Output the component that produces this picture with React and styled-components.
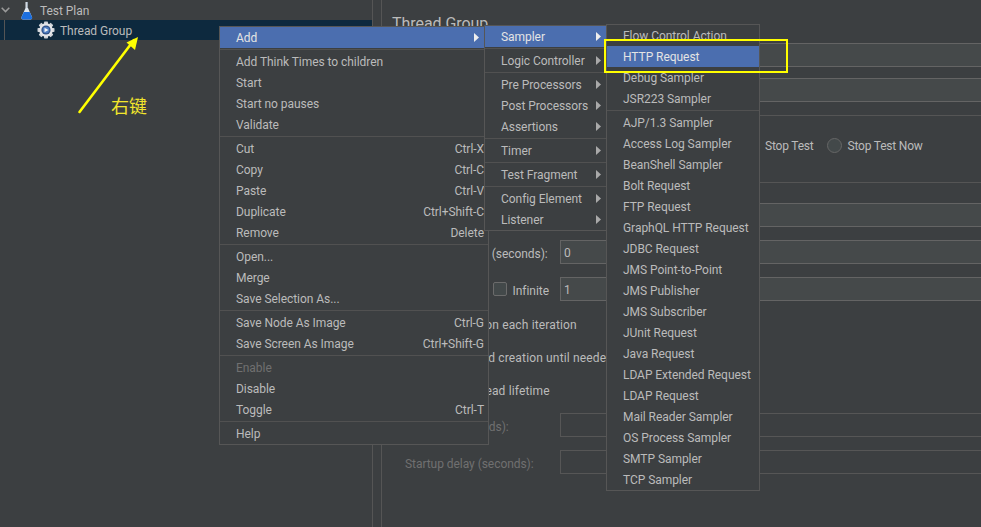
import React from 'react';
import styled, { createGlobalStyle } from 'styled-components';

const bg = '#3c3f41';
const line = '#555555';
const text = '#bbbbbb';
const font = 'Roboto, "Noto Sans CJK SC", sans-serif';

const GlobalStyle = createGlobalStyle`
  html, body {
    margin: 0;
    height: 100%;
    overflow: hidden;
    background: ${bg};
  }
`;

const Window = styled.div`
  position: relative;
  display: flex;
  width: 981px;
  height: 527px;
  overflow: hidden;
  background: ${bg};
  color: ${text};
  font-family: ${font};
  font-size: 12px;
  letter-spacing: -0.05px;
`;

const TreePane = styled.div`
  flex: none;
  width: 372px;
  border-right: 1px solid ${line};
`;

const TreeRow = styled.div`
  position: relative;
  display: flex;
  align-items: center;
  height: 20px;
  padding-left: ${p => p.$indent}px;
  gap: ${p => p.$gap}px;
  background: ${p => (p.$selected ? '#0d293e' : 'transparent')};
  ${p => p.$selected && `
    &::before {
      content: '';
      position: absolute;
      left: 4px;
      top: 0;
      bottom: 0;
      width: 1px;
      background: ${line};
    }
  `}
`;

const TreeText = styled.span`
  padding-top: 2px;
`;

const ChevronSlot = styled.span`
  display: flex;
  flex: none;
  width: 13px;
`;

const Gutter = styled.div`
  flex: none;
  width: 8px;
`;

const Panel = styled.div`
  flex: 1;
  min-width: 0;
  padding: 13px 0 0 10px;
  border-left: 1px solid ${line};
  overflow: hidden;
`;

const Title = styled.h1`
  margin: 0 0 8px;
  height: 22px;
  font-size: 16px;
  font-weight: 400;
  line-height: 22px;
`;

const NameRows = styled.div`
  display: flex;
  flex-direction: column;
  gap: 11px;
`;

const Row = styled.div`
  display: grid;
  grid-template-columns: 155px 1fr;
  align-items: center;
  height: 24px;
`;

const Label = styled.span`
  padding-top: 3px;
  white-space: nowrap;
  color: ${p => (p.$disabled ? '#707070' : text)};
`;

const Field = styled.input`
  box-sizing: border-box;
  width: calc(100% + 4px);
  height: 24px;
  padding: 2px 3px 0;
  border: 1px solid #646464;
  background: ${p => (p.disabled ? bg : '#45494a')};
  color: ${text};
  font-family: ${font};
  font-size: 12px;
  outline: none;
  &:disabled {
    border-color: #565656;
  }
`;

const Section = styled.section`
  border-top: 1px solid ${line};
  margin-top: ${p => p.$top}px;
`;

const RadioRow = styled.div`
  display: flex;
  align-items: center;
  gap: 13px;
  height: 20px;
  padding: 19px 0 27px 352px;
  white-space: nowrap;
`;

const RadioItem = styled.label`
  display: flex;
  align-items: center;
  gap: 6px;
`;

const RadioLabel = styled(Label)`
  padding-top: 1px;
  letter-spacing: -0.2px;
`;

const Radio = styled.span`
  flex: none;
  box-sizing: border-box;
  width: 15px;
  height: 15px;
  border: 1px solid #666666;
  border-radius: 50%;
  background: #43494a;
`;

const ThreadForm = styled.div`
  display: flex;
  flex-direction: column;
  gap: 13px;
  padding: 20px 0 0 13px;
`;

const LoopLabel = styled.div`
  display: flex;
  align-items: center;
  justify-content: flex-end;
  padding-right: 11px;
`;

const Checkbox = styled.span`
  flex: none;
  box-sizing: border-box;
  width: 14px;
  height: 14px;
  border: 1px solid #6b6b6b;
  border-radius: 2px;
  background: #43494a;
`;

const InfiniteText = styled(Label)`
  margin-left: 6px;
`;

const CheckRow = styled.label`
  display: flex;
  align-items: center;
  gap: 5px;
  height: 20px;
  white-space: nowrap;
`;

const CheckLabel = styled(Label)`
  padding-top: 2px;
  letter-spacing: 0.15px;
`;

const Menu = styled.div`
  position: absolute;
  left: ${p => p.$left}px;
  top: ${p => p.$top}px;
  z-index: ${p => p.$layer};
  box-sizing: border-box;
  width: ${p => p.$width}px;
  border: 1px solid #565656;
  background: ${bg};
`;

const Item = styled.div`
  display: flex;
  align-items: center;
  justify-content: space-between;
  height: 21px;
  padding: 0 4px 0 16px;
  white-space: nowrap;
  background: ${p => (p.$selected ? '#4b6eaf' : 'transparent')};
  color: ${p => (p.$selected ? '#e4e4e4' : p.$disabled ? '#707070' : text)};
`;

const Separator = styled.div`
  height: 1px;
  margin: 1px 0;
  background: #515151;
`;

const Arrow = styled.svg`
  flex: none;
  width: 5px;
  height: 9px;
  margin-right: ${p => p.$inset}px;
  fill: ${p => (p.$selected ? '#eeeeee' : '#a9a9a9')};
`;

const PointerArrow = styled.svg`
  position: absolute;
  left: 70px;
  top: 30px;
  z-index: 5;
`;

const Note = styled.span`
  position: absolute;
  left: 111px;
  top: 93px;
  z-index: 5;
  color: #f2e52c;
  font-family: "Noto Sans CJK SC", sans-serif;
  font-size: 18px;
  line-height: 24px;
`;

const Highlight = styled.div`
  position: absolute;
  left: 604px;
  top: 39px;
  z-index: 5;
  box-sizing: border-box;
  width: 184px;
  height: 34px;
  border: 2px solid #ffff00;
`;

const Flask = () => (
  <svg width="14" height="19" viewBox="0 0 14 19">
    <path d="M5.500 1h2.500v6l4 9c.5 1.300-.3 2.500-1.600 2.500H3.100C1.800 18.500 1 17.300 1.500 16L5.500 7z" fill="#dfe6ee" />
    <path d="M3.900 11h5.800l2.300 5c.5 1.300-.3 2.500-1.600 2.500H3.100C1.800 18.500 1 17.300 1.500 16z" fill="#1c6fe0" />
    <path d="M6.800 1h1.200v6h-1.200z" fill="#9aa5b1" />
  </svg>
);

const Gear = () => (
  <svg width="18" height="18" viewBox="0 0 18 18">
    {[0, 45, 90, 135].map(a => (
      <rect key={a} x="7" y="0.500" width="4" height="17" rx="0.8" fill="#cfd3d8" transform={`rotate(${a} 9 9)`} />
    ))}
    <circle cx="9" cy="9" r="6.800" fill="#e4e6e9" />
    <circle cx="9" cy="9" r="4.600" fill="#2f5288" />
    <circle cx="9" cy="9" r="3.300" fill="#4f7dc0" />
    <path d="M7.500 6.700 11.500 9l-4 2.300z" fill="#f2f4f7" />
  </svg>
);

const Chevron = () => (
  <svg width="9" height="6" viewBox="0 0 9 6">
    <path d="M.7.8 4.500 4.600 8.300.8" fill="none" stroke="#9b9b9b" strokeWidth="1.500" />
  </svg>
);

const SEP = { sep: true };

const mainMenu = [
  { label: 'Add', selected: true, arrow: true },
  SEP,
  { label: 'Add Think Times to children' },
  { label: 'Start' },
  { label: 'Start no pauses' },
  { label: 'Validate' },
  SEP,
  { label: 'Cut', hint: 'Ctrl-X' },
  { label: 'Copy', hint: 'Ctrl-C' },
  { label: 'Paste', hint: 'Ctrl-V' },
  { label: 'Duplicate', hint: 'Ctrl+Shift-C' },
  { label: 'Remove', hint: 'Delete' },
  SEP,
  { label: 'Open...' },
  { label: 'Merge' },
  { label: 'Save Selection As...' },
  SEP,
  { label: 'Save Node As Image', hint: 'Ctrl-G' },
  { label: 'Save Screen As Image', hint: 'Ctrl+Shift-G' },
  SEP,
  { label: 'Enable', disabled: true },
  { label: 'Disable' },
  { label: 'Toggle', hint: 'Ctrl-T' },
  SEP,
  { label: 'Help' },
];

const addMenu = [
  { label: 'Sampler', selected: true, arrow: true },
  SEP,
  { label: 'Logic Controller', arrow: true },
  SEP,
  { label: 'Pre Processors', arrow: true },
  { label: 'Post Processors', arrow: true },
  { label: 'Assertions', arrow: true },
  SEP,
  { label: 'Timer', arrow: true },
  SEP,
  { label: 'Test Fragment', arrow: true },
  SEP,
  { label: 'Config Element', arrow: true },
  { label: 'Listener', arrow: true },
];

const samplerMenu = [
  { label: 'Flow Control Action' },
  { label: 'HTTP Request', selected: true },
  { label: 'Debug Sampler' },
  { label: 'JSR223 Sampler' },
  SEP,
  ...[
    'AJP/1.3 Sampler',
    'Access Log Sampler',
    'BeanShell Sampler',
    'Bolt Request',
    'FTP Request',
    'GraphQL HTTP Request',
    'JDBC Request',
    'JMS Point-to-Point',
    'JMS Publisher',
    'JMS Subscriber',
    'JUnit Request',
    'Java Request',
    'LDAP Extended Request',
    'LDAP Request',
    'Mail Reader Sampler',
    'OS Process Sampler',
    'SMTP Sampler',
    'TCP Sampler',
  ].map(label => ({ label })),
];

const PopupMenu = ({ items, left, top, width, layer, arrowInset }) => (
  <Menu $left={left} $top={top} $width={width} $layer={layer}>
    {items.map((item, i) => (item.sep ? (
      <Separator key={i} />
    ) : (
      <Item key={item.label} $selected={item.selected} $disabled={item.disabled}>
        <span>{item.label}</span>
        {item.hint && <span>{item.hint}</span>}
        {item.arrow && (
          <Arrow viewBox="0 0 5 9" $inset={arrowInset} $selected={item.selected}>
            <path d="M0 0 5 4.500 0 9z" />
          </Arrow>
        )}
      </Item>
    )))}
  </Menu>
);

const App = () => (
  <Window>
    <GlobalStyle />
    <TreePane>
      <TreeRow $indent={1} $gap={6}>
        <ChevronSlot><Chevron /></ChevronSlot>
        <Flask />
        <TreeText>Test Plan</TreeText>
      </TreeRow>
      <TreeRow $indent={37} $gap={5} $selected>
        <Gear />
        <TreeText>Thread Group</TreeText>
      </TreeRow>
    </TreePane>
    <Gutter />
    <Panel>
      <Title>Thread Group</Title>
      <NameRows>
        <Row><span /><Field readOnly /></Row>
        <Row><span /><Field readOnly /></Row>
      </NameRows>
      <Section $top={13}>
        <RadioRow>
          <RadioItem><Radio /><RadioLabel>Stop Test</RadioLabel></RadioItem>
          <RadioItem><Radio /><RadioLabel>Stop Test Now</RadioLabel></RadioItem>
        </RadioRow>
      </Section>
      <Section $top={0}>
        <ThreadForm>
          <Row><span /><Field readOnly /></Row>
          <Row>
            <Label>Ramp-up period (seconds):</Label>
            <Field readOnly value="0" />
          </Row>
          <Row>
            <LoopLabel>
              <Checkbox />
              <InfiniteText>Infinite</InfiniteText>
            </LoopLabel>
            <Field readOnly value="1" />
          </Row>
          <CheckRow><Checkbox /><CheckLabel>Same user on each iteration</CheckLabel></CheckRow>
          <CheckRow><Checkbox /><CheckLabel>Delay Thread creation until needed</CheckLabel></CheckRow>
          <CheckRow><Checkbox /><CheckLabel>Specify Thread lifetime</CheckLabel></CheckRow>
          <Row>
            <Label $disabled>Duration (seconds):</Label>
            <Field disabled />
          </Row>
          <Row>
            <Label $disabled>Startup delay (seconds):</Label>
            <Field disabled />
          </Row>
        </ThreadForm>
      </Section>
    </Panel>

    <PopupMenu items={mainMenu} left={219} top={26} width={270} layer={1} arrowInset={5} />
    <PopupMenu items={addMenu} left={484} top={25} width={123} layer={2} arrowInset={1} />
    <PopupMenu items={samplerMenu} left={606} top={24} width={154} layer={3} arrowInset={1} />

    <PointerArrow width="80" height="90" viewBox="0 0 80 90">
      <path d="M9.500 82 64 10" stroke="#ffff00" strokeWidth="2.600" strokeLinecap="round" fill="none" />
      <path d="M68 7 56.500 12.500 65 20z" fill="#ffff00" />
    </PointerArrow>
    <Note>右键</Note>
    <Highlight />
  </Window>
);

export default App;
